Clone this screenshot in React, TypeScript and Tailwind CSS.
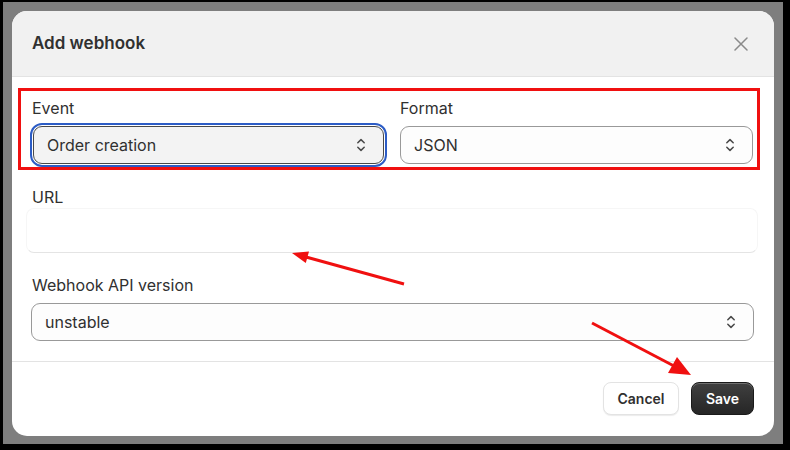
import React from 'react';

function UpDownIcon() {
  return (
    <svg viewBox="0 0 20 20" className="w-5 h-5 text-[#4a4a4a]" fill="none" stroke="currentColor" strokeWidth={1.5} strokeLinecap="round" strokeLinejoin="round">
      <path d="M6.8 7.8 L10 4.6 L13.2 7.8" />
      <path d="M6.8 12.2 L10 15.4 L13.2 12.2" />
    </svg>
  );
}

function CloseIcon() {
  return (
    <svg viewBox="0 0 14 14" className="w-[14px] h-[14px] text-[#8a8a8a]" fill="none" stroke="currentColor" strokeWidth={1.5} strokeLinecap="round">
      <path d="M1 1 L13 13 M13 1 L1 13" />
    </svg>
  );
}

interface SelectProps {
  value: string;
  focused?: boolean;
}

function SelectBox({ value, focused }: SelectProps) {
  return (
    <div
      className={
        focused
          ? 'flex items-center justify-between h-[38px] pl-[13px] pr-[12px] rounded-[9px] border border-[#4a4a4a] bg-[#f3f3f3] outline-2 outline-offset-1 outline-[#2c5cc5]'
          : 'flex items-center justify-between h-[38px] pl-[13px] pr-[12px] rounded-[9px] border border-[#999999] bg-[#fdfdfd]'
      }
    >
      <span className="text-[16px] text-[#303030]">{value}</span>
      <UpDownIcon />
    </div>
  );
}

export default function App() {
  return (
    <div className="w-[790px] h-[450px] bg-black pt-[2px] pl-[3px] pr-[7px] pb-[6px] font-['Inter',sans-serif] relative">
      <div className="w-full h-full bg-[#7e7e7e] pt-[9px] pl-[9px] pr-[9px] pb-[8px]">
        <div className="w-full h-full bg-white rounded-[15px] overflow-hidden flex flex-col">
          <div className="h-[66px] bg-[#f1f1f1] border-b border-[#e3e3e3] flex items-center justify-between pl-[20px] pr-[26px] shrink-0">
            <h2 className="text-[17px] font-semibold text-[#303030]">Add webhook</h2>
            <CloseIcon />
          </div>

          <div className="flex-1 pt-[11px]">
            <div className="ml-[6px] mr-[14px] border-[3px] border-[#f01010] pt-[7px] pb-[3px] pl-[11px] pr-[4px] grid grid-cols-2 gap-[15px]">
              <div>
                <p className="text-[16px] text-[#303030] leading-5 mb-[8px]">Event</p>
                <div className="px-[1px]">
                  <SelectBox value="Order creation" focused />
                </div>
              </div>
              <div>
                <p className="text-[16px] text-[#303030] leading-5 mb-[8px]">Format</p>
                <SelectBox value="JSON" />
              </div>
            </div>

            <div className="pt-[17px]">
              <p className="pl-[20px] text-[16px] text-[#303030] leading-5">URL</p>
              <div className="mt-[1px] ml-[14px] mr-[16px] h-[45px] border border-[#f6f6f6] border-b-[#e4e4e4] rounded-[8px]" />
            </div>

            <div className="pt-[22px] pl-[19px] pr-[20px]">
              <p className="pl-[1px] text-[16px] text-[#303030] leading-5 mb-[8px]">Webhook API version</p>
              <SelectBox value="unstable" />
            </div>
          </div>

          <div className="border-t border-[#e3e3e3] flex justify-end gap-[12px] pt-[20px] pb-[21px] pr-[20px] shrink-0">
            <button className="h-[33px] w-[76px] rounded-[8px] border border-[#e3e3e3] bg-white shadow-[0_1px_1px_rgba(0,0,0,0.08)] text-[14px] font-semibold text-[#303030]">
              Cancel
            </button>
            <button className="h-[33px] w-[63px] rounded-[8px] bg-gradient-to-b from-[#404040] to-[#262626] border border-[#1a1a1a] shadow-[inset_0_1px_0_rgba(255,255,255,0.25)] text-[14px] font-semibold text-white">
              Save
            </button>
          </div>
        </div>
      </div>

      <svg className="absolute inset-0 pointer-events-none" width="790" height="450" viewBox="0 0 790 450">
        <line x1="404" y1="284" x2="306" y2="257" stroke="#f01010" strokeWidth="3" />
        <polygon points="292,253 309,251.5 305.8,263.1" fill="#f01010" />
        <line x1="592" y1="323" x2="674" y2="366" stroke="#f01010" strokeWidth="3" />
        <polygon points="691,375 668,373 677,357" fill="#f01010" />
      </svg>
    </div>
  );
}
